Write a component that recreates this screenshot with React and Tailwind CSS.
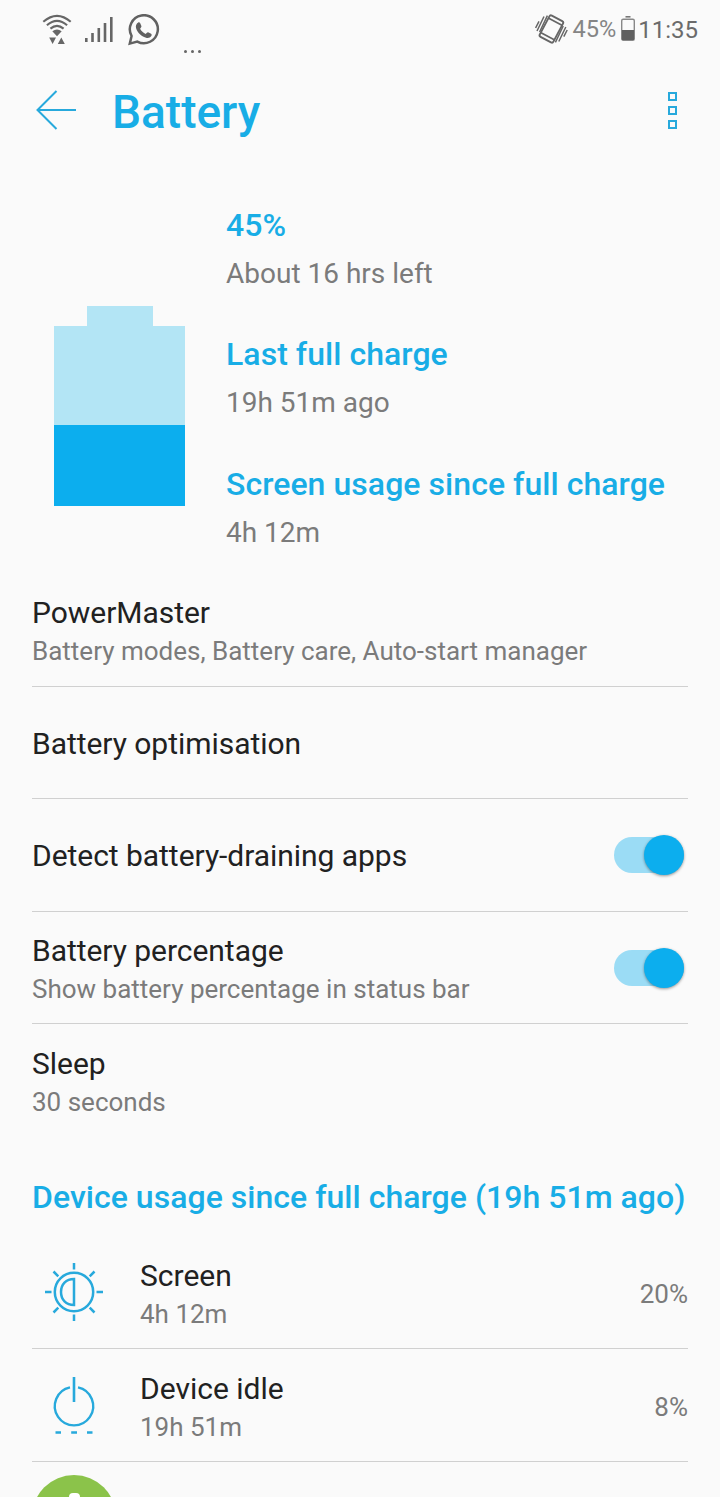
import React, { useState } from 'react';

const menuItems = [
  { id: 'power', title: 'PowerMaster', sub: 'Battery modes, Battery care, Auto-start manager' },
  { id: 'optimise', title: 'Battery optimisation' },
  { id: 'detect', title: 'Detect battery-draining apps', toggle: true },
  { id: 'percent', title: 'Battery percentage', sub: 'Show battery percentage in status bar', toggle: true },
  { id: 'sleep', title: 'Sleep', sub: '30 seconds' },
];

const stats = [
  { label: '45%', value: 'About 16 hrs left' },
  { label: 'Last full charge', value: '19h 51m ago' },
  { label: 'Screen usage since full charge', value: '4h 12m' },
];

const WifiIcon = () => (
  <svg width="30" height="32" viewBox="0 0 30 32" fill="none" stroke="#666" strokeWidth="2.1">
    <path d="M1.3 7.8Q15 -4.2 28.7 7.8M4.9 11.2Q15 2.4 25.1 11.2M8.4 14.6Q15 9 21.6 14.6" />
    <path d="M10.3 17.2Q15 13.6 19.7 17.2L15 22.2ZM7.2 23.6H14L10.6 30ZM15.8 30H22.8L19.3 23.4Z" fill="#666" stroke="none" />
  </svg>
);

const SignalIcon = () => (
  <svg width="28" height="25" viewBox="0 0 28 25" fill="#666">
    <path d="M0 21H2.6V25H0ZM6.2 16H8.8V25H6.2ZM12.5 11H15.1V25H12.5ZM18.7 6H21.3V25H18.7ZM25 0H27.6V25H25Z" />
  </svg>
);

const WhatsappIcon = () => (
  <svg width="32" height="32" viewBox="0 0 32 32" fill="none">
    <path d="M1.8 29.6L3.6 22A14 14 0 1 1 9.3 27.6Z" stroke="#616161" strokeWidth="2.5" />
    <path d="M10.2 8.4C10.9 8.1 11.7 8.2 12.1 9L13.4 12.1C13.7 12.8 12.9 13.8 12.1 14.8C13.4 17.2 15.2 18.9 17.8 20C18.8 18.9 19.4 18 20.1 18.3L23.1 19.8C23.9 20.2 23.7 21.3 23.3 22.1C22.5 23.7 20.3 24.3 18.7 23.9C13.4 22.7 9.5 18.7 8.1 14.2C7.4 12 8.3 9.5 10.2 8.4Z" fill="#616161" />
  </svg>
);

const VibrateIcon = () => (
  <svg width="33" height="30" viewBox="0 0 33 30" fill="none" stroke="#666" className="shrink-0">
    <g transform="rotate(28 16.4 15)">
      <rect x="8.7" y="3" width="15.4" height="24" rx="1.8" strokeWidth="1.9" />
      <path d="M9 6.8H24M9 23.2H24" strokeWidth="1.7" />
    </g>
    <path d="M0.6 14L4 7.3M2 17L9 2.5M4.6 18L12.4 1.6" strokeWidth="1.5" />
    <path d="M32.2 16L28.8 22.7M30.8 13L23.8 27.5M28.2 12L20.4 28.4" strokeWidth="1.5" />
  </svg>
);

const StatusBattery = () => (
  <svg width="14" height="25" viewBox="0 0 14 25">
    <path d="M4.5 0.8H9.5" stroke="#777" strokeWidth="1.6" />
    <rect x="0.7" y="3.2" width="12.6" height="21" rx="1.5" fill="none" stroke="#888" strokeWidth="1.4" />
    <path d="M1 14H13V24H1Z" fill="#606060" />
  </svg>
);

const ScreenIcon = () => (
  <svg width="60" height="60" viewBox="0 0 60 60" fill="none" stroke="#27a9dc" strokeWidth="2.5">
    <circle cx="30" cy="30" r="19.2" />
    <path d="M30 17V43C22 43 17 37.5 17 30S22 17 30 17Z" />
    <path d="M30 1V7.4M30 52.6V59M1 30H7.5M52.5 30H59M9.5 9.5L14.3 14.3M50.5 9.5L45.7 14.3M9.5 50.5L14.3 45.7M50.5 50.5L45.7 45.7" />
  </svg>
);

const IdleIcon = () => (
  <svg width="60" height="60" viewBox="0 0 60 60" fill="none" stroke="#27a9dc" strokeWidth="2.4">
    <path d="M26 12.4A19.2 19.2 0 1 0 34 12.4" />
    <path d="M30 2V27" strokeWidth="2.6" />
    <path d="M11.5 57.5H17M27.2 57.5H33M43 57.5H48.5" />
  </svg>
);

const usage = [
  { name: 'Screen', time: '4h 12m', percent: '20%', Icon: ScreenIcon },
  { name: 'Device idle', time: '19h 51m', percent: '8%', Icon: IdleIcon },
];

const Toggle = ({ on, onClick }) => (
  <button role="switch" aria-checked={on} onClick={onClick} className="flex h-10 w-[70px] items-center">
    <span className={`flex h-9 w-full items-center rounded-full bg-[#9bdcf5] ${on ? 'justify-end' : 'justify-start'}`}>
      <span className="size-10 shrink-0 rounded-full bg-[#0caeee] shadow-[0_1px_3px_rgba(0,0,0,0.4)]" />
    </span>
  </button>
);

const App = () => {
  const [toggles, setToggles] = useState({ detect: true, percent: true });

  const flip = (id) => setToggles({ ...toggles, [id]: !toggles[id] });

  return (
    <div className="h-[1497px] w-[720px] overflow-hidden bg-[#fafafa] font-['Roboto',sans-serif] text-[#212121]">
      <div className="flex h-[60px] justify-between pl-[42px] pr-[22px] text-[#6b6b6b]">
        <div className="flex items-start pt-[14px]">
          <WifiIcon />
          <div className="ml-[13px] mt-[3px]"><SignalIcon /></div>
          <div className="ml-[15px]"><WhatsappIcon /></div>
          <div className="ml-[24px] mt-[36px] flex gap-[4px]">
            <span className="size-[3px] rounded-full bg-[#666]" />
            <span className="size-[3px] rounded-full bg-[#666]" />
            <span className="size-[3px] rounded-full bg-[#666]" />
          </div>
        </div>
        <div className="flex h-[60px] items-center">
          <div className="-mt-[3px]"><VibrateIcon /></div>
          <span className="ml-[4px] text-[23.6px] text-[#858585]">45%</span>
          <div className="-mt-[3px] ml-[5px]"><StatusBattery /></div>
          <span className="ml-[3px] text-[24px]">11:35</span>
        </div>
      </div>

      <header className="flex h-[100px] items-center pl-[36px] pr-[43px]">
        <svg width="41" height="40" viewBox="0 0 41 40" fill="none" stroke="#27a9dc" strokeWidth="2">
          <path d="M20.5 1L1.5 20L20.5 39M1.5 20H40" />
        </svg>
        <h1 className="ml-[35px] pt-[4px] text-[46px] font-medium leading-none text-[#18ade6]">Battery</h1>
        <div className="ml-auto flex flex-col gap-[5px]">
          <span className="size-[9px] border-2 border-[#27a9dc]" />
          <span className="size-[9px] border-2 border-[#27a9dc]" />
          <span className="size-[9px] border-2 border-[#27a9dc]" />
        </div>
      </header>

      <section className="flex h-[414px] pl-[54px] pt-[45px]">
        <div className="mt-[101px] flex w-[131px] flex-col items-center">
          <div className="h-[20px] w-[66px] bg-[#b3e5f5]" />
          <div className="h-[99px] w-[131px] bg-[#b3e5f5]" />
          <div className="h-[81px] w-[131px] bg-[#0caeee]" />
        </div>
        <div className="ml-[41px] flex flex-col">
          {stats.map((s) => (
            <div key={s.label} className="h-[129.3px] shrink-0">
              <div className="text-[32px] font-medium leading-[40px] tracking-[0.05px] text-[#18ade6]">{s.label}</div>
              <div className="mt-[11px] text-[28px] leading-[36px] text-[#7b7b7b]">{s.value}</div>
            </div>
          ))}
        </div>
      </section>

      <section className="px-8">
        {menuItems.map((item) => (
          <div
            key={item.id}
            className="flex h-[112.6px] items-center justify-between border-b border-[#d0d0d0] pr-1 last:border-transparent"
          >
            <div className={item.sub ? 'pt-[5px]' : 'pt-[3px]'}>
              <div className="text-[30px] leading-[38px] tracking-[-0.04px]">{item.title}</div>
              {item.sub && <div className="text-[26px] leading-[38px] text-[#7b7b7b]">{item.sub}</div>}
            </div>
            {item.toggle && <Toggle on={toggles[item.id]} onClick={() => flip(item.id)} />}
          </div>
        ))}
      </section>

      <section className="px-8">
        <h2 className="flex h-[99px] items-center pt-[22px] text-[32px] font-medium tracking-[0.03px] text-[#18ade6]">
          <span className="whitespace-nowrap">Device usage since full charge (19h 51m ago)</span>
        </h2>
        {usage.map(({ name, time, percent, Icon }) => (
          <div key={name} className="flex h-[112.8px] items-center border-b border-[#d0d0d0] pl-3">
            <Icon />
            <div className="ml-9 pt-[6px]">
              <div className="text-[30px] leading-[38px]">{name}</div>
              <div className="text-[26px] leading-[38px] text-[#7b7b7b]">{time}</div>
            </div>
            <span className="ml-auto pt-[5px] text-[26px] text-[#7b7b7b]">{percent}</span>
          </div>
        ))}
        <div className="mt-[13px] flex size-[84px] justify-center rounded-full bg-[#8bc34a] pt-[18px]">
          <div className="h-[30px] w-[11px] rounded-t-sm bg-white" />
        </div>
      </section>
    </div>
  );
};

export default App;
